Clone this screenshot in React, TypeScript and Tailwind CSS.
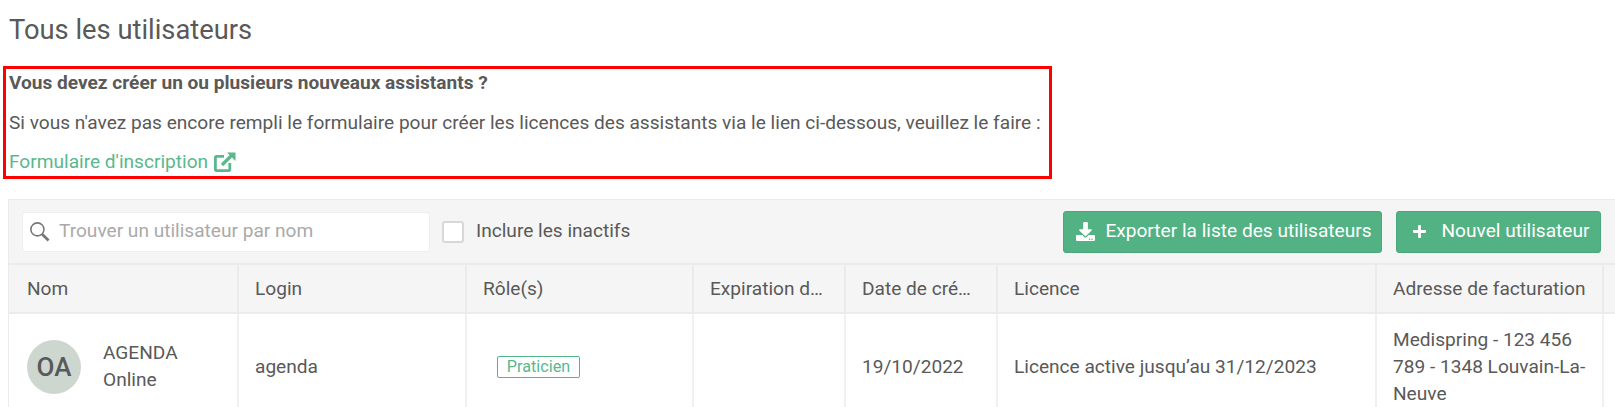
import React from "react";
import { FaDownload, FaPlus } from "react-icons/fa";

const columns = [
  { name: "Nom", width: "w-[230px] pl-[18px]" },
  { name: "Login", width: "w-[228px] pl-[16px]" },
  { name: "Rôle(s)", width: "w-[227px] pl-[16px]" },
  { name: "Expiration d…", width: "w-[152px] pl-[16px]" },
  { name: "Date de cré…", width: "w-[152px] pl-[16px]" },
  { name: "Licence", width: "w-[379px] pl-[16px]" },
  { name: "Adresse de facturation", width: "w-[227px] pl-[16px]" },
];

const ExternalIcon = () => (
  <svg viewBox="0 0 22 20" className="ml-[6px] h-[20px] w-[22px]" fill="none" stroke="currentColor">
    <path d="M10 4.3H2.6a1.2 1.2 0 0 0-1.2 1.2v12a1.2 1.2 0 0 0 1.2 1.2h12a1.2 1.2 0 0 0 1.2-1.2V11" strokeWidth="2.8" />
    <path d="M8 13 18.5 2.5" strokeWidth="3.2" />
    <path d="M13 0.5h8.5V9z" fill="currentColor" stroke="none" />
  </svg>
);

const SearchIcon = () => (
  <svg viewBox="0 0 20 20" className="h-[21px] w-[21px]" fill="none" stroke="#777">
    <circle cx="8" cy="8" r="6.2" strokeWidth="1.5" />
    <path d="M12.6 12.6 18.6 18.6" strokeWidth="2.6" />
  </svg>
);

export default function App() {
  return (
    <div className="h-[407px] w-[1615px] overflow-hidden bg-white font-['Roboto',sans-serif] text-[19.1px] text-[#595959]">
      <h1 className="pl-[9px] pt-[12px] text-[27.3px] leading-[37px] font-normal">Tous les utilisateurs</h1>
      <div className="mt-[17px] ml-[3px] h-[113px] w-[1049px] border-[3px] border-[#ff0000] pl-[3px]">
        <p className="leading-[27px] font-bold">Vous devez créer un ou plusieurs nouveaux assistants ?</p>
        <p className="mt-[13px] leading-[27px]">
          Si vous n'avez pas encore rempli le formulaire pour créer les licences des assistants via le lien ci-dessous, veuillez le faire :
        </p>
        <a href="#" className="mt-[12px] flex items-center leading-[27px] text-[#5ab88c]">
          Formulaire d'inscription
          <ExternalIcon />
        </a>
      </div>

      <div className="mt-[20px] ml-[8px] w-[1607px] border-t border-l border-[#ebebeb]">
        <div className="flex h-[63px] items-center bg-[#f5f5f5] pr-[14px] pl-[13px]">
          <div className="flex h-[40px] w-[408px] items-center rounded-[3px] border border-[#eeeeee] bg-white pl-[6px]">
            <SearchIcon />
            <span className="ml-[9px] text-[#aaa]">Trouver un utilisateur par nom</span>
          </div>
          <span className="ml-[12px] h-[22px] w-[22px] rounded-[3px] border-2 border-[#d8d8d8] bg-white" />
          <span className="ml-[12px]">Inclure les inactifs</span>
          <button className="ml-auto flex h-[42px] w-[319px] items-center justify-center rounded-[3px] border border-[#4aa87b] bg-[#52b283] pl-[3px] text-white">
            <FaDownload className="mr-[10px] h-[19px] w-[19px]" />
            Exporter la liste des utilisateurs
          </button>
          <button className="ml-[14px] flex h-[42px] w-[205px] items-center justify-center rounded-[3px] border border-[#4aa87b] bg-[#52b283] pl-[4px] text-white">
            <FaPlus className="mr-[15px] h-[15px] w-[15px]" />
            Nouvel utilisateur
          </button>
        </div>

        <div className="flex h-[51px] border-y-2 border-[#ebebeb] bg-[#f5f5f5]">
          {columns.map((col) => (
            <div key={col.name} className={`${col.width} flex shrink-0 items-center border-r-2 border-[#ebebeb] pt-[2px] whitespace-nowrap`}>
              {col.name}
            </div>
          ))}
        </div>

        <div className="flex h-[106px]">
          <div className="flex w-[230px] shrink-0 items-center border-r-2 border-[#f0f0f0] pl-[18px]">
            <div className="flex h-[54px] w-[54px] shrink-0 items-center justify-center rounded-full bg-[#cdd7d0] text-[26px] font-medium">
              OA
            </div>
            <div className="mb-[2px] ml-[22px] leading-[27px]">
              <div>AGENDA</div>
              <div>Online</div>
            </div>
          </div>
          <div className="flex w-[228px] shrink-0 items-center border-r-2 border-[#f0f0f0] pl-[16px]">agenda</div>
          <div className="flex w-[227px] shrink-0 items-center border-r-2 border-[#f0f0f0] pl-[30px]">
            <span className="flex h-[22px] w-[83px] items-center justify-center rounded-[2px] border border-[#52b788] text-[16.2px] text-[#5ab88c]">
              Praticien
            </span>
          </div>
          <div className="w-[152px] shrink-0 border-r-2 border-[#f0f0f0]" />
          <div className="flex w-[152px] shrink-0 items-center border-r-2 border-[#f0f0f0] pl-[16px]">19/10/2022</div>
          <div className="flex w-[379px] shrink-0 items-center border-r-2 border-[#f0f0f0] pl-[16px]">Licence active jusqu’au 31/12/2023</div>
          <div className="flex w-[227px] shrink-0 items-center border-r-2 border-[#f0f0f0] pr-[10px] pl-[16px] leading-[27px]">
            <div className="mb-[2px]">Medispring - 123 456 789 - 1348 Louvain-La-Neuve</div>
          </div>
        </div>
      </div>
    </div>
  );
}
